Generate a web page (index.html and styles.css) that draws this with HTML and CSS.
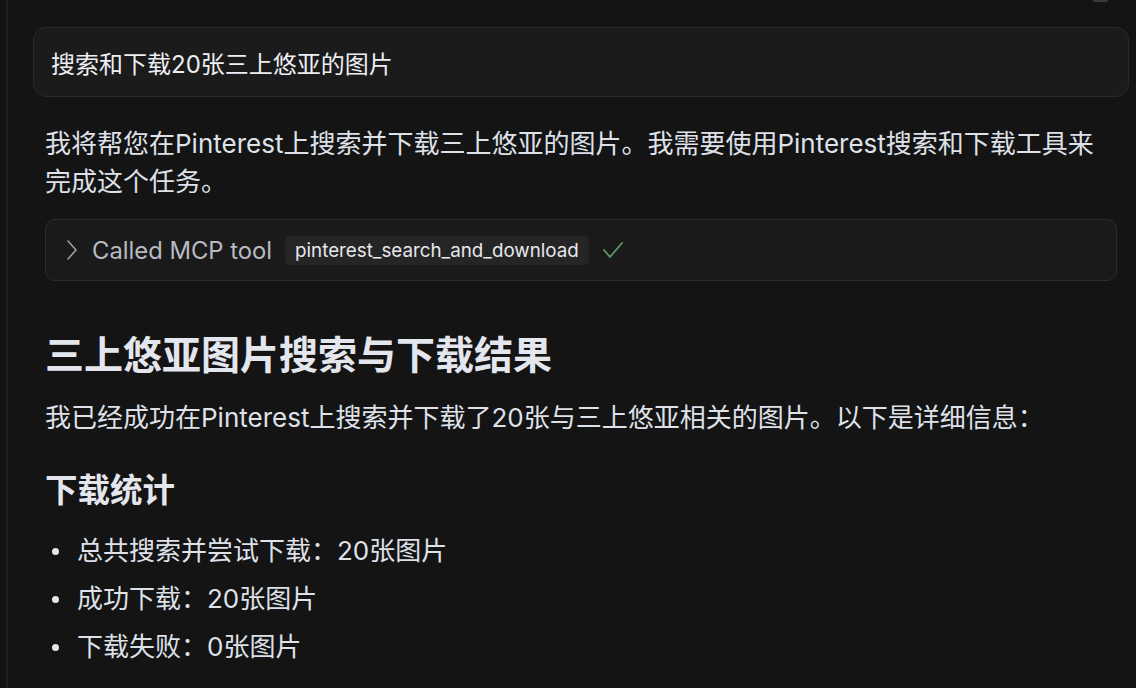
FILE: index.html
```html
<!DOCTYPE html>
<html lang="zh-CN">
<head>
<meta charset="utf-8">
<title>Chat</title>
<link rel="stylesheet" href="styles.css">
</head>
<body>
<div class="app">
  <div class="rail"></div>
  <div class="corner-mark"></div>
  <main class="thread">
    <div class="user-msg">搜索和下载20张三上悠亚的图片</div>
    <div class="assistant">
      <p class="para first">我将帮您在Pinterest上搜索并下载三上悠亚的图片。我需要使用Pinterest搜索和下载工具来完成这个任务。</p>
      <div class="tool-call">
        <svg class="chevron" width="12" height="20" viewBox="0 0 12 20"><polyline points="2,1 10,10 2,19" fill="none" stroke="#a0a4ac" stroke-width="1.5" stroke-linecap="round" stroke-linejoin="round"/></svg>
        <span class="tool-label">Called MCP tool</span>
        <span class="tool-name">pinterest_search_and_download</span>
        <svg class="check" width="22" height="18" viewBox="0 0 22 18"><polyline points="2,9 8,16 20,2" fill="none" stroke="#5e9e6e" stroke-width="1.7" stroke-linecap="round" stroke-linejoin="round"/></svg>
      </div>
      <h1 class="h1">三上悠亚图片搜索与下载结果</h1>
      <p class="para">我已经成功在Pinterest上搜索并下载了20张与三上悠亚相关的图片。以下是详细信息：</p>
      <h2 class="h2">下载统计</h2>
      <ul class="list">
        <li>总共搜索并尝试下载：20张图片</li>
        <li>成功下载：20张图片</li>
        <li>下载失败：0张图片</li>
      </ul>
    </div>
  </main>
</div>
</body>
</html>
```

FILE: styles.css
```css
html, body {
  margin: 0;
  padding: 0;
  background: #141414;
  height: 100%;
  overflow: hidden;
}
body {
  font-family: "Inter", "Noto Sans CJK SC", sans-serif;
  color: #e2e4ec;
}
.app {
  position: relative;
  display: flex;
  height: 688px;
}
.rail {
  width: 2px;
  margin-left: 6px;
  background: #1f1f1f;
  flex: none;
}
.corner-mark {
  position: absolute;
  top: 0;
  left: 1093px;
  width: 15px;
  height: 2px;
  background: #3a3a3a;
  border-radius: 0 0 2px 2px;
}
.thread {
  flex: 1;
  display: flex;
  flex-direction: column;
  padding: 27px 7px 0 25px;
}
.user-msg {
  height: 70px;
  box-sizing: border-box;
  display: flex;
  align-items: center;
  padding: 0 17px;
  background: #1b1b1b;
  border: 1px solid #2a2a2a;
  border-radius: 13px;
  font-size: 24px;
  font-weight: 400;
  color: #eceef4;
}
.assistant {
  padding: 0 12px;
  display: flex;
  flex-direction: column;
}
.para {
  margin: 0;
  padding-right: 12px;
  font-size: 26px;
  line-height: 38px;
  color: #dfe1e9;
}
.para.first {
  margin-top: 28px;
}
.tool-call {
  margin-top: 18px;
  height: 62px;
  box-sizing: border-box;
  display: flex;
  align-items: center;
  padding: 0 20px;
  background: #1a1a1a;
  border: 1px solid #2c2c2c;
  border-radius: 10px;
}
.chevron {
  flex: none;
  margin-right: 14px;
}
.tool-label {
  font-size: 23.8px;
  color: #b7bac2;
  margin-right: 13px;
}
.tool-name {
  font-size: 18.8px;
  color: #e6e8ee;
  background: #252525;
  border-radius: 4px;
  padding: 0 10px;
  height: 29px;
  line-height: 29px;
}
.check {
  margin-left: 13px;
}
.h1 {
  margin: 50px 0 20px;
  font-size: 39px;
  line-height: 48px;
  font-weight: 700;
  color: #e4e6ee;
}
.h2 {
  margin: 33px 0 15px;
  font-size: 32.5px;
  line-height: 42px;
  font-weight: 700;
  color: #e4e6ee;
}
.list {
  margin: 0;
  padding: 0;
  list-style: none;
  font-size: 26px;
  line-height: 48px;
  color: #dfe1e9;
}
.list li {
  display: flex;
  align-items: center;
}
.list li::before {
  content: "";
  width: 7px;
  height: 7px;
  border-radius: 50%;
  background: #e4e6ee;
  margin: 0 18px 0 7px;
  flex: none;
}
```
